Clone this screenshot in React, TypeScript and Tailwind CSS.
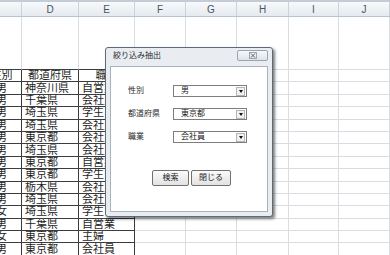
const font = 'font-["Liberation_Sans","Noto_Sans_CJK_JP",sans-serif]'

const cols = [
    { key: 'C', w: 'w-[40px]' },
    { key: 'D', w: 'w-[57px]' },
    { key: 'E', w: 'w-[56px]' },
    { key: 'F', w: 'w-[51px]' },
    { key: 'G', w: 'w-[51px]' },
    { key: 'H', w: 'w-[52px]' },
    { key: 'I', w: 'w-[50px]' },
    { key: 'J', w: 'w-[51px]' },
]

const table = [
    ['性別', '都道府県', '職業'],
    ['男', '神奈川県', '自営業'],
    ['男', '千葉県', '会社員'],
    ['男', '埼玉県', '学生'],
    ['男', '埼玉県', '会社員'],
    ['男', '東京都', '会社員'],
    ['男', '埼玉県', '会社員'],
    ['男', '東京都', '自営業'],
    ['男', '東京都', '学生'],
    ['男', '栃木県', '会社員'],
    ['男', '埼玉県', '会社員'],
    ['女', '埼玉県', '学生'],
    ['男', '千葉県', '自営業'],
    ['女', '東京都', '主婦'],
    ['男', '東京都', '会社員'],
]

function HeaderRow() {
    return (
        <div className="flex h-[15px] border-b border-[#b9c3cf] bg-gradient-to-b from-[#f7f9fb] to-[#e6eaef]">
            {cols.map((c) => (
                <div
                    key={c.key}
                    className={`${c.w} shrink-0 flex items-center justify-center border-r border-[#cdd3da] pt-[2px] text-[10px] leading-none text-[#4a5461]`}
                >
                    {c.key === 'C' ? '' : c.key}
                </div>
            ))}
        </div>
    )
}

function BlankRow() {
    return (
        <div className="flex h-[53px]">
            {cols.map((c, i) => (
                <div
                    key={c.key}
                    className={`${c.w} shrink-0 border-r border-[#d9dde2] ${i < 3 ? 'border-b border-b-[#3c3c3c]' : 'border-b border-b-[#d9dde2]'}`}
                />
            ))}
        </div>
    )
}

function DataRow({ cells, head }: { cells: string[]; head: boolean }) {
    return (
        <div className="flex h-[12.4px]">
            {cols.map((c, i) => {
                const inTable = i < 3
                const text = inTable ? cells[i] : ''
                const align = head || i === 0 ? 'justify-center' : 'justify-start pl-[3px]'
                return (
                    <div
                        key={c.key}
                        className={`${c.w} shrink-0 flex items-center overflow-hidden whitespace-nowrap text-[11px] leading-none text-[#1e1e1e] ${align} ${
                            inTable ? 'border-r border-b border-[#3c3c3c]' : 'border-r border-b border-[#d9dde2]'
                        }`}
                    >
                        {text}
                    </div>
                )
            })}
        </div>
    )
}

function Combo({ value }: { value: string }) {
    return (
        <div className="flex h-[12px] w-[74px] items-center border border-[#7d7d7d] bg-white">
            <span className="flex-1 pl-[7px] text-[8px] leading-none text-[#222]">{value}</span>
            <span className="mr-[1px] flex h-[9px] w-[9px] items-center justify-center border border-[#b5b5b5] bg-[#f1f1f1]">
                <span className="h-0 w-0 border-x-[2.5px] border-t-[3px] border-x-transparent border-t-[#111]" />
            </span>
        </div>
    )
}

function Dialog() {
    const fields = [
        { label: '性別', value: '男' },
        { label: '都道府県', value: '東京都' },
        { label: '職業', value: '会社員' },
    ]
    return (
        <div className="absolute left-[105px] top-[47px] flex h-[170px] w-[168px] flex-col rounded-[3px] border border-[#5f6a78] bg-[#e9edf1] shadow-[2px_2px_3px_rgba(0,0,0,0.5)]">
            <div className="flex h-[18px] items-start justify-between">
                <span className="mt-[4px] pl-[7px] text-[8px] leading-none text-[#2a2a2a]">絞り込み抽出</span>
                <span className="mr-[4px] mt-[2px] flex h-[11px] w-[31px] items-center justify-center rounded-[2px] border border-[#9aa4b1] bg-gradient-to-b from-[#f6f7f9] to-[#dfe3e9]">
                    <svg width="8" height="7" viewBox="0 0 8 7">
                        <rect x="0.5" y="0.5" width="7" height="6" fill="none" stroke="#8a939e" strokeWidth="0.8" />
                        <path d="M2 1.5 L6 5.5 M6 1.5 L2 5.5" stroke="#5b636e" strokeWidth="1" />
                    </svg>
                </span>
            </div>
            <div className="mx-[4px] mb-[4px] flex flex-1 flex-col border border-[#a9b3bf] bg-white">
                <div className="mt-[18px] flex flex-col gap-[11px]">
                    {fields.map((f) => (
                        <div key={f.label} className="flex items-center">
                            <span className="w-[62px] shrink-0 pl-[17px] text-[8px] leading-none text-[#2a2a2a]">{f.label}</span>
                            <Combo value={f.value} />
                        </div>
                    ))}
                </div>
                <div className="mt-[27px] flex gap-[2px] pl-[41px]">
                    <button className="flex h-[16px] w-[37px] items-center justify-center rounded-[2px] border border-[#707070] bg-gradient-to-b from-[#fbfbfb] to-[#e2e2e2] text-[8px] leading-none text-[#222]">
                        検索
                    </button>
                    <button className="flex h-[16px] w-[40px] items-center justify-center rounded-[2px] border border-[#707070] bg-gradient-to-b from-[#fbfbfb] to-[#e2e2e2] text-[8px] leading-none text-[#222]">
                        閉じる
                    </button>
                </div>
            </div>
        </div>
    )
}

export default function App() {
    return (
        <main className={`relative h-[255px] w-[390px] overflow-hidden bg-white ${font}`}>
            <div className="h-[2px] bg-[#c3ccd7]" />
            <div className="-ml-[18px] flex flex-col">
                <HeaderRow />
                <BlankRow />
                {table.map((r, i) => (
                    <DataRow key={i} cells={r} head={i === 0} />
                ))}
            </div>
            <Dialog />
        </main>
    )
}
